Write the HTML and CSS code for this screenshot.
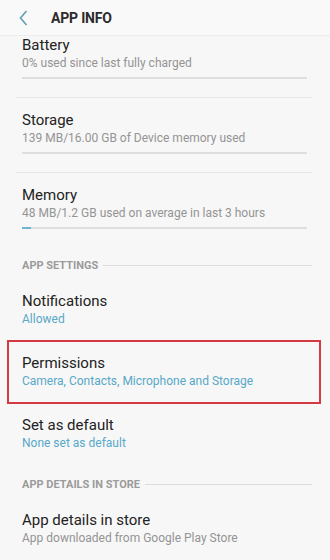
FILE: index.html
```html
<!DOCTYPE html>
<html lang="en">
<head>
  <meta charset="UTF-8" />
  <meta name="viewport" content="width=device-width, initial-scale=1.0" />
  <title>App info</title>
  <link rel="stylesheet" href="styles.css">
</head>
<body>
  <div class="screen">
    <header class="topbar">
      <svg class="back" width="9" height="16" viewBox="0 0 9 16">
        <polyline points="7.5,1 1.5,8 7.5,15" fill="none" stroke="#5f9fb3" stroke-width="1.6" />
      </svg>
      <h1>APP INFO</h1>
    </header>

    <div class="list">
      <div class="usage first">
        <div class="title">Battery</div>
        <div class="sub">0% used since last fully charged</div>
        <div class="bar"><span style="width:0%"></span></div>
      </div>
      <div class="sep"></div>
      <div class="usage">
        <div class="title">Storage</div>
        <div class="sub">139 MB/16.00 GB of Device memory used</div>
        <div class="bar"><span style="width:0%"></span></div>
      </div>
      <div class="sep"></div>
      <div class="usage last">
        <div class="title">Memory</div>
        <div class="sub">48 MB/1.2 GB used on average in last 3 hours</div>
        <div class="bar"><span style="width:3.2%"></span></div>
      </div>

      <div class="section">APP SETTINGS</div>
      <div class="item">
        <div class="title">Notifications</div>
        <div class="sub blue">Allowed</div>
      </div>
      <div class="item highlight">
        <div class="title">Permissions</div>
        <div class="sub blue">Camera, Contacts, Microphone and Storage</div>
      </div>
      <div class="item">
        <div class="title">Set as default</div>
        <div class="sub blue">None set as default</div>
      </div>

      <div class="section">APP DETAILS IN STORE</div>
      <div class="item">
        <div class="title">App details in store</div>
        <div class="sub">App downloaded from Google Play Store</div>
      </div>
    </div>
  </div>
</body>
</html>
```

FILE: styles.css
```css
:root {
  --fundo: #f7f7f7;
  --texto: #222222;
  --cinza: #949494;
  --azul: #58a8c8;
  --linha: #e6e6e6;
  --vermelho: #d33a44;
}
html, body {
  margin: 0;
  padding: 0;
}
body {
  font-family: Roboto, "Noto Sans", "Liberation Sans", sans-serif;
  background: var(--fundo);
  color: var(--texto);
}
.screen {
  width: 330px;
  height: 560px;
  overflow: hidden;
  background: var(--fundo);
}
.topbar {
  height: 35px;
  display: flex;
  align-items: center;
  padding-left: 19px;
  border-bottom: 1px solid #ededed;
  background: #f9f9f9;
}
.back {
  display: block;
  margin-top: 1px;
}
.topbar h1 {
  margin: 0 0 0 23px;
  font-size: 14px;
  font-weight: 700;
  letter-spacing: -0.2px;
  color: #2b2b2b;
}
.title {
  font-size: 15px;
  line-height: 18px;
  color: var(--texto);
}
.sub {
  margin-top: 2px;
  font-size: 12px;
  line-height: 14px;
  color: var(--cinza);
}
.sub.blue {
  color: var(--azul);
}
.usage {
  padding: 13px 23px 18px 22px;
}
.usage.first {
  padding-top: 0;
}
.usage.last {
  padding-bottom: 16px;
}
.bar {
  margin-top: 7px;
  height: 2px;
  background: #dedede;
}
.bar span {
  display: block;
  height: 100%;
  background: #6fb6d2;
}
.sep {
  height: 1px;
  margin: 0 18px 0 16px;
  background: var(--linha);
}
.section {
  display: flex;
  align-items: center;
  gap: 5px;
  padding: 14px 18px 6px 22px;
  font-size: 11px;
  line-height: 13px;
  font-weight: 700;
  color: #9b9b9b;
}
.section::after {
  content: "";
  flex: 1;
  height: 1px;
  background: #dcdcdc;
}
.item {
  position: relative;
  padding: 14px 22px;
}
.highlight::before {
  content: "";
  position: absolute;
  top: 0;
  bottom: -2px;
  left: 7px;
  right: 9px;
  border: 2px solid var(--vermelho);
}
```
